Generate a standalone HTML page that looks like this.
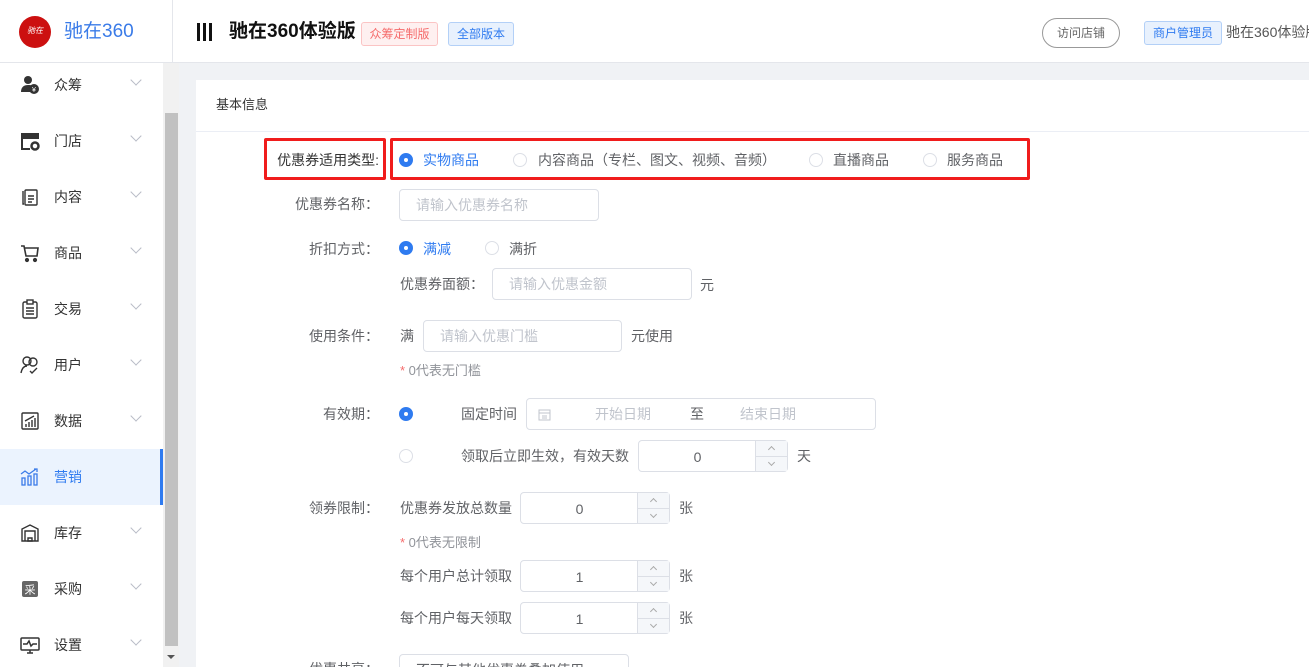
<!DOCTYPE html>
<html><head><meta charset="utf-8"><style>
*{margin:0;padding:0;box-sizing:border-box}
html,body{width:1309px;height:667px;overflow:hidden}
body{position:relative;background:#f0f2f5;font-family:"Liberation Sans","Noto Sans CJK SC",sans-serif;font-size:14px;line-height:16px;color:#333}
.a{position:absolute;white-space:nowrap}
.hdr{left:0;top:0;width:1309px;height:63px;background:#fff;border-bottom:1px solid #e4e6eb}
.side{left:0;top:63px;width:163px;height:604px;background:#fff}
.item{position:absolute;left:0;width:163px;height:56px}
.item .t{position:absolute;left:54px;top:20px;font-size:14px;line-height:16px;color:#333}
.item .ic{position:absolute;left:20px;top:18px;width:20px;height:20px}
.item .ch{position:absolute;left:132px;top:19px;width:8px;height:8px;border-right:1px solid #b8bcc6;border-bottom:1px solid #b8bcc6;transform:rotate(45deg)}
.lab{color:#606266;text-align:right;width:160px}
.inp{position:absolute;border:1px solid #dcdfe6;border-radius:4px;background:#fff;height:32px;color:#c0c4cc;font-size:14px;line-height:30px;padding-left:16px}
.rad{position:absolute;width:14px;height:14px;border-radius:50%;border:1px solid #dcdfe6;background:#fff}
.rad.on{background:#2f7bf0;border-color:#2f7bf0}
.rad.on:after{content:"";position:absolute;left:4px;top:4px;width:4px;height:4px;border-radius:50%;background:#fff}
.num{position:absolute;height:32px;width:150px;border:1px solid #dcdfe6;border-radius:4px;background:#fff}
.num .v{position:absolute;left:0;width:117px;text-align:center;top:8px;color:#606266;font-size:14px}
.num .s{position:absolute;right:0;top:0;width:32px;height:30px;background:#f5f7fa;border-left:1px solid #dcdfe6}
.num .s:before{content:"";position:absolute;left:0;right:0;top:15px;border-top:1px solid #dcdfe6}
.num .u,.num .d{position:absolute;left:13px;width:5px;height:5px;border-left:1px solid #aaa;border-top:1px solid #aaa;transform:rotate(45deg)}
.num .u{top:6px}.num .d{top:19px;transform:rotate(225deg)}
</style></head><body>
<div class="a hdr"></div>
<div class="a" style="left:172px;top:0;width:1px;height:63px;background:#e4e6eb"></div>
<div class="a" style="left:19px;top:16px;width:32px;height:32px;border-radius:50%;background:#cc1010;color:#fff;font-size:8px;font-style:italic;text-align:center;line-height:30px">驰在</div>
<div class="a" style="left:64px;top:21px;font-size:19px;line-height:22px;color:#3a7be8">驰在360</div>
<div class="a" style="left:197px;top:23px;width:3px;height:18px;background:#111"></div>
<div class="a" style="left:203px;top:23px;width:3px;height:18px;background:#111"></div>
<div class="a" style="left:209px;top:23px;width:3px;height:18px;background:#111"></div>
<div class="a" style="left:229px;top:21px;font-size:19px;line-height:22px;font-weight:bold;color:#111">驰在360体验版</div>
<div class="a" style="left:361px;top:22px;height:24px;width:77px;border:1px solid #fbc4c4;background:#fef0f0;color:#f56c6c;font-size:12px;line-height:22px;text-align:center;border-radius:3px">众筹定制版</div>
<div class="a" style="left:448px;top:22px;height:24px;width:66px;border:1px solid #b3d0f7;background:#e8f1fd;color:#2f7bf0;font-size:12px;line-height:22px;text-align:center;border-radius:3px">全部版本</div>
<div class="a" style="left:1042px;top:18px;width:78px;height:30px;border:1px solid #999;border-radius:15px;color:#666;font-size:12px;line-height:28px;text-align:center">访问店铺</div>
<div class="a" style="left:1144px;top:21px;width:78px;height:24px;border:1px solid #b3d0f7;background:#e8f1fd;color:#2f7bf0;font-size:12px;line-height:22px;text-align:center;border-radius:3px">商户管理员</div>
<div class="a" style="left:1226px;top:24px;font-size:14px;color:#555">驰在360体验版</div>

<div class="a side">
<div class="item" style="top:-6px"><svg class="ic" viewBox="0 0 20 20"><circle cx="8" cy="5" r="4" fill="#333"/><path d="M1 17c0-5 3-7 7-7s5 1 5 2v5z" fill="#333"/><circle cx="14" cy="14" r="5" fill="#333"/><text x="14" y="17" font-size="7" fill="#fff" text-anchor="middle">¥</text></svg><div class="t">众筹</div><div class="ch"></div></div>
<div class="item" style="top:50px"><svg class="ic" viewBox="0 0 20 20"><path d="M1 2h18v6H1z" fill="#333"/><path d="M2 8v10h8" stroke="#333" stroke-width="2" fill="none"/><circle cx="15" cy="15" r="3.5" fill="none" stroke="#333" stroke-width="2.5"/></svg><div class="t">门店</div><div class="ch"></div></div>
<div class="item" style="top:106px"><svg class="ic" viewBox="0 0 20 20" fill="none" stroke="#333" stroke-width="1.4"><path d="M3 4v13h1"/><rect x="5" y="3" width="12" height="15" rx="1"/><path d="M8 9h6M8 12h6M8 15h4"/></svg><div class="t">内容</div><div class="ch"></div></div>
<div class="item" style="top:162px"><svg class="ic" viewBox="0 0 20 20" fill="none" stroke="#333" stroke-width="1.6"><path d="M1 3h3l2 10h11l1-8H5"/><circle cx="7" cy="17" r="1.3" fill="#333"/><circle cx="15" cy="17" r="1.3" fill="#333"/></svg><div class="t">商品</div><div class="ch"></div></div>
<div class="item" style="top:218px"><svg class="ic" viewBox="0 0 20 20" fill="none" stroke="#333" stroke-width="1.4"><rect x="3" y="3" width="14" height="16" rx="1.5"/><rect x="7" y="1" width="6" height="4" fill="#fff"/><path d="M6 9h8M6 12h8M6 15h8"/></svg><div class="t">交易</div><div class="ch"></div></div>
<div class="item" style="top:274px"><svg class="ic" viewBox="0 0 20 20" fill="none" stroke="#333" stroke-width="1.4"><circle cx="7" cy="6" r="4"/><circle cx="13" cy="7" r="4"/><path d="M1 18c1-5 3-7 6-7M10 16l2 2 5-5"/></svg><div class="t">用户</div><div class="ch"></div></div>
<div class="item" style="top:330px"><svg class="ic" viewBox="0 0 20 20" fill="none" stroke="#333" stroke-width="1.4"><rect x="2" y="2" width="16" height="16" rx="1"/><path d="M6 16v-3M9 16v-5M12 16v-7M15 16V7M5 10l9-5"/></svg><div class="t">数据</div><div class="ch"></div></div>
<div class="item" style="top:386px;background:#ebf3fe"><div style="position:absolute;right:0;top:0;width:3px;height:56px;background:#2f7bf0"></div><svg class="ic" viewBox="0 0 20 20" fill="none" stroke="#3a7be8" stroke-width="1.3"><rect x="2" y="11" width="3" height="7"/><rect x="8" y="9" width="3" height="9"/><rect x="14" y="7" width="3" height="11"/><path d="M1 7l4-3 4 3 7-5M14 2h3v3"/></svg><div class="t" style="color:#2f7bf0">营销</div></div>
<div class="item" style="top:442px"><svg class="ic" viewBox="0 0 20 20" fill="none" stroke="#333" stroke-width="1.4"><path d="M2 18V6l8-4 8 4v12z"/><path d="M5 18V8h10v10M8 15h4v3H8z"/></svg><div class="t">库存</div><div class="ch"></div></div>
<div class="item" style="top:498px"><svg class="ic" viewBox="0 0 20 20"><rect x="2" y="2" width="16" height="16" rx="2" fill="#666"/><text x="10" y="14.5" font-size="11" fill="#fff" text-anchor="middle" font-family="Noto Sans CJK SC">采</text></svg><div class="t">采购</div><div class="ch"></div></div>
<div class="item" style="top:554px"><svg class="ic" viewBox="0 0 20 20" fill="none" stroke="#333" stroke-width="1.5"><rect x="1" y="3" width="18" height="12" rx="1"/><path d="M3 9h4l2-3 2 5 2-2h4M7 18h6M10 15v3"/></svg><div class="t">设置</div><div class="ch"></div></div>
</div>
<div class="a" style="left:163px;top:63px;width:16px;height:604px;background:#f1f1f1"></div>
<div class="a" style="left:165px;top:113px;width:13px;height:533px;background:#c1c1c1"></div>
<div class="a" style="left:167px;top:655px;width:0;height:0;border-left:4px solid transparent;border-right:4px solid transparent;border-top:4px solid #555"></div>

<div class="a" style="left:196px;top:80px;width:1113px;height:587px;background:#fff"></div>
<div class="a" style="left:216px;top:97px;font-size:13px;color:#333">基本信息</div>
<div class="a" style="left:196px;top:131px;width:1113px;height:1px;background:#ebeef5"></div>

<div class="a" style="left:264px;top:138px;width:122px;height:42px;border:3px solid #f01c1c;border-radius:2px"></div>
<div class="a" style="left:390px;top:138px;width:640px;height:42px;border:3px solid #f01c1c;border-radius:2px"></div>
<div class="a lab" style="left:219px;top:152px;color:#333">优惠券适用类型:</div>
<div class="rad on" style="left:399px;top:153px"></div><div class="a" style="left:423px;top:152px;color:#2f7bf0">实物商品</div>
<div class="rad" style="left:513px;top:153px"></div><div class="a" style="left:538px;top:152px;color:#606266">内容商品（专栏、图文、视频、音频）</div>
<div class="rad" style="left:809px;top:153px"></div><div class="a" style="left:833px;top:152px;color:#606266">直播商品</div>
<div class="rad" style="left:923px;top:153px"></div><div class="a" style="left:947px;top:152px;color:#606266">服务商品</div>

<div class="a lab" style="left:219px;top:196px">优惠券名称：</div>
<div class="inp" style="left:399px;top:189px;width:200px">请输入优惠券名称</div>

<div class="a lab" style="left:219px;top:241px">折扣方式：</div>
<div class="rad on" style="left:399px;top:241px"></div><div class="a" style="left:423px;top:241px;color:#2f7bf0">满减</div>
<div class="rad" style="left:485px;top:241px"></div><div class="a" style="left:509px;top:241px;color:#606266">满折</div>
<div class="a" style="left:400px;top:276px;color:#606266">优惠券面额：</div>
<div class="inp" style="left:492px;top:268px;width:200px">请输入优惠金额</div>
<div class="a" style="left:700px;top:277px;color:#606266">元</div>

<div class="a lab" style="left:219px;top:328px">使用条件：</div>
<div class="a" style="left:400px;top:328px;color:#606266">满</div>
<div class="inp" style="left:423px;top:320px;width:199px">请输入优惠门槛</div>
<div class="a" style="left:631px;top:328px;color:#606266">元使用</div>
<div class="a" style="left:400px;top:363px;color:#909399;font-size:13px"><span style="color:#f56c6c">*</span> 0代表无门槛</div>

<div class="a lab" style="left:219px;top:406px">有效期：</div>
<div class="rad on" style="left:399px;top:407px"></div>
<div class="a" style="left:461px;top:406px;color:#606266">固定时间</div>
<div class="inp" style="left:526px;top:398px;width:350px;padding:0"><svg style="position:absolute;left:11px;top:9px" width="13" height="13" viewBox="0 0 13 13" fill="none" stroke="#c0c4cc"><rect x="1" y="2" width="11" height="10"/><path d="M1 5h11M4 8h5M4 10h5"/></svg><span style="position:absolute;left:68px">开始日期</span><span style="position:absolute;left:163px;color:#606266">至</span><span style="position:absolute;left:213px">结束日期</span></div>
<div class="rad" style="left:399px;top:449px"></div>
<div class="a" style="left:461px;top:448px;color:#606266">领取后立即生效，有效天数</div>
<div class="num" style="left:638px;top:440px"><div class="v">0</div><div class="s"><i class="u"></i><i class="d"></i></div></div>
<div class="a" style="left:797px;top:448px;color:#606266">天</div>

<div class="a lab" style="left:219px;top:500px">领券限制：</div>
<div class="a" style="left:400px;top:500px;color:#606266">优惠券发放总数量</div>
<div class="num" style="left:520px;top:492px"><div class="v">0</div><div class="s"><i class="u"></i><i class="d"></i></div></div>
<div class="a" style="left:679px;top:500px;color:#606266">张</div>
<div class="a" style="left:400px;top:535px;color:#909399;font-size:13px"><span style="color:#f56c6c">*</span> 0代表无限制</div>
<div class="a" style="left:400px;top:568px;color:#606266">每个用户总计领取</div>
<div class="num" style="left:520px;top:560px"><div class="v">1</div><div class="s"><i class="u"></i><i class="d"></i></div></div>
<div class="a" style="left:679px;top:568px;color:#606266">张</div>
<div class="a" style="left:400px;top:610px;color:#606266">每个用户每天领取</div>
<div class="num" style="left:520px;top:602px"><div class="v">1</div><div class="s"><i class="u"></i><i class="d"></i></div></div>
<div class="a" style="left:679px;top:610px;color:#606266">张</div>

<div class="a lab" style="left:219px;top:661px">优惠共享：</div>
<div class="inp" style="left:399px;top:654px;width:230px;color:#606266">不可与其他优惠券叠加使用</div>
</body></html>
